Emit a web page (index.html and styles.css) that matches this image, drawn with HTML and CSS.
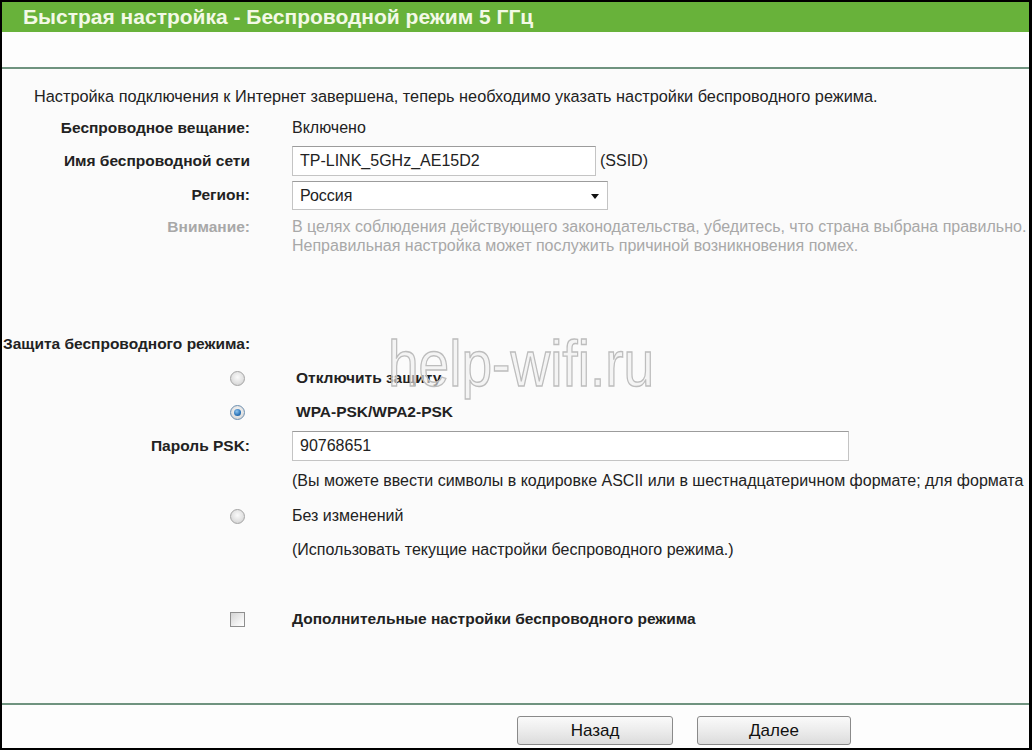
FILE: index.html
```html
<!DOCTYPE html>
<html>

<head>
    <meta charset="UTF-8">
    <meta name="viewport" content="width=device-width, initial-scale=1.0">
    <title>Быстрая настройка</title>
    <link rel="stylesheet" href="styles.css">
</head>

<body>

    <div class="frame">
        <!-- =========== Title =========== -->
        <div class="header">Быстрая настройка - Беспроводной режим 5 ГГц</div>
        <div class="band"></div>

        <!-- =========== Form =========== -->
        <div class="form">
            <div class="row intro">Настройка подключения к Интернет завершена, теперь необходимо указать настройки беспроводного режима.</div>

            <div class="row short">
                <div class="label">Беспроводное вещание:</div>
                <div class="value">Включено</div>
            </div>

            <div class="row">
                <div class="label">Имя беспроводной сети</div>
                <div class="value">
                    <div class="field ssid">TP-LINK_5GHz_AE15D2</div>
                    <span class="suffix">(SSID)</span>
                </div>
            </div>

            <div class="row">
                <div class="label">Регион:</div>
                <div class="value">
                    <div class="field select">Россия</div>
                </div>
            </div>

            <div class="note">
                <div class="label">Внимание:</div>
                <div class="value">В целях соблюдения действующего законодательства, убедитесь, что страна выбрана правильно.<br>Неправильная настройка может послужить причиной возникновения помех.</div>
            </div>

            <div class="row section">Защита беспроводного режима:</div>

            <div class="row">
                <div class="label"><span class="radio"></span></div>
                <div class="value bold shift">Отключить защиту</div>
            </div>

            <div class="row">
                <div class="label"><span class="radio checked"></span></div>
                <div class="value bold shift">WPA-PSK/WPA2-PSK</div>
            </div>

            <div class="row">
                <div class="label">Пароль PSK:</div>
                <div class="value">
                    <div class="field psk">90768651</div>
                </div>
            </div>

            <div class="row hint">
                <div class="label"></div>
                <div class="value clip">(Вы можете ввести символы в кодировке ASCII или в шестнадцатеричном формате; для формата</div>
            </div>

            <div class="row">
                <div class="label"><span class="radio"></span></div>
                <div class="value">Без изменений</div>
            </div>

            <div class="row">
                <div class="label"></div>
                <div class="value">(Использовать текущие настройки беспроводного режима.)</div>
            </div>

            <div class="row extra">
                <div class="label"><span class="checkbox"></span></div>
                <div class="value bold">Дополнительные настройки беспроводного режима</div>
            </div>
        </div>

        <!-- =========== Buttons =========== -->
        <div class="footer">
            <button class="btn back">Назад</button>
            <button class="btn next">Далее</button>
        </div>

        <div class="watermark">help-wifi.ru</div>
    </div>

</body>

</html>
```

FILE: styles.css
```css
* {
    margin: 0;
    padding: 0;
    box-sizing: border-box;
}

:root {
    --green: #68b23a;
    --line: #6f937f;
    --text: #222;
    --muted: #a8a8a8;
    --bg: #fbfbfb;
}

body {
    background: #fff;
    font-family: "Liberation Sans", Arial, sans-serif;
    font-size: 16px;
    color: var(--text);
}

.frame {
    position: relative;
    width: 1032px;
    height: 750px;
    border: 2px solid #000;
    border-right-width: 3px;
    background: var(--bg);
    display: flex;
    flex-direction: column;
    overflow: hidden;
}

.header {
    height: 30px;
    background: var(--green);
    color: #f3f9e6;
    font-size: 21px;
    font-weight: bold;
    line-height: 30px;
    padding-left: 21px;
    flex-shrink: 0;
}

.band {
    height: 37px;
    background: #fdfdfd;
    border-bottom: 2px solid var(--line);
    flex-shrink: 0;
}

.form {
    flex: 1;
    padding-top: 12px;
}

.row {
    display: flex;
    align-items: center;
    height: 34px;
    white-space: nowrap;
}

.row.intro {
    height: 31px;
    padding-left: 32px;
    font-size: 16.3px;
}

.row.short {
    height: 32px;
}

.label {
    width: 248px;
    flex-shrink: 0;
    text-align: right;
    font-weight: bold;
    font-size: 15.5px;
    display: flex;
    justify-content: flex-end;
    align-items: center;
}

.value {
    margin-left: 42px;
    display: flex;
    align-items: center;
    white-space: nowrap;
}

.value.bold {
    font-weight: bold;
    font-size: 15.5px;
}

.value.shift {
    margin-left: 46px;
}

.value.clip {
    overflow: hidden;
    width: 740px;
}

.field {
    height: 30px;
    background: #fff;
    border: 1px solid #c4c4c4;
    border-top-color: #9c9c9c;
    font-size: 16px;
    line-height: 28px;
    padding-left: 7px;
}

.ssid {
    width: 304px;
}

.suffix {
    margin-left: 4px;
}

.select {
    position: relative;
    width: 316px;
    height: 29px;
    line-height: 27px;
}

.select::after {
    content: '';
    position: absolute;
    right: 8px;
    top: 12px;
    border-left: 4px solid transparent;
    border-right: 4px solid transparent;
    border-top: 5px solid #111;
}

.psk {
    width: 557px;
}

.note {
    display: flex;
    margin-top: 5px;
    line-height: 19px;
    color: var(--muted);
    white-space: nowrap;
}

.note .label {
    align-items: flex-start;
}

.row.section {
    margin-top: 72px;
    font-weight: bold;
    font-size: 15.5px;
    padding-left: 1px;
}

.row.hint {
    height: 36px;
}

.row.extra {
    margin-top: 35px;
}

.label .radio,
.label .checkbox {
    margin-right: 5px;
}

.radio {
    display: inline-block;
    width: 15px;
    height: 15px;
    border-radius: 50%;
    border: 1px solid #a4a4a4;
    background: radial-gradient(circle at 50% 40%, #fafafa 0%, #e2e2e2 55%, #c8c8c8 100%);
    position: relative;
}

.radio.checked {
    border-color: #6d8fb0;
}

.radio.checked::after {
    content: '';
    position: absolute;
    left: 3px;
    top: 3px;
    width: 7px;
    height: 7px;
    border-radius: 50%;
    background: radial-gradient(circle at 40% 35%, #8cc4f0 0%, #2a73b8 60%, #164f88 100%);
}

.checkbox {
    display: inline-block;
    width: 15px;
    height: 15px;
    border: 1px solid #8e8e8e;
    background: linear-gradient(135deg, #d4d4d4 0%, #f0f0f0 60%, #fff 100%);
}

.footer {
    height: 45px;
    border-top: 2px solid var(--line);
    background: #fdfdfd;
    display: flex;
    padding-top: 11px;
    padding-left: 515px;
    gap: 24px;
    flex-shrink: 0;
}

.btn {
    height: 29px;
    border: 1px solid #8a8a8a;
    border-radius: 3px;
    background: linear-gradient(#fafafa 0%, #ececec 50%, #dcdcdc 100%);
    font-family: "Liberation Sans", Arial, sans-serif;
    font-size: 17px;
    color: #111;
}

.btn.back {
    width: 156px;
}

.btn.next {
    width: 154px;
}

.watermark {
    position: absolute;
    left: 386px;
    top: 322px;
    font-size: 64px;
    line-height: 80px;
    color: rgba(240, 240, 240, 0.6);
    -webkit-text-stroke: 1.4px #bdbdbd;
    transform: scaleX(0.86);
    transform-origin: left top;
    pointer-events: none;
}
```
